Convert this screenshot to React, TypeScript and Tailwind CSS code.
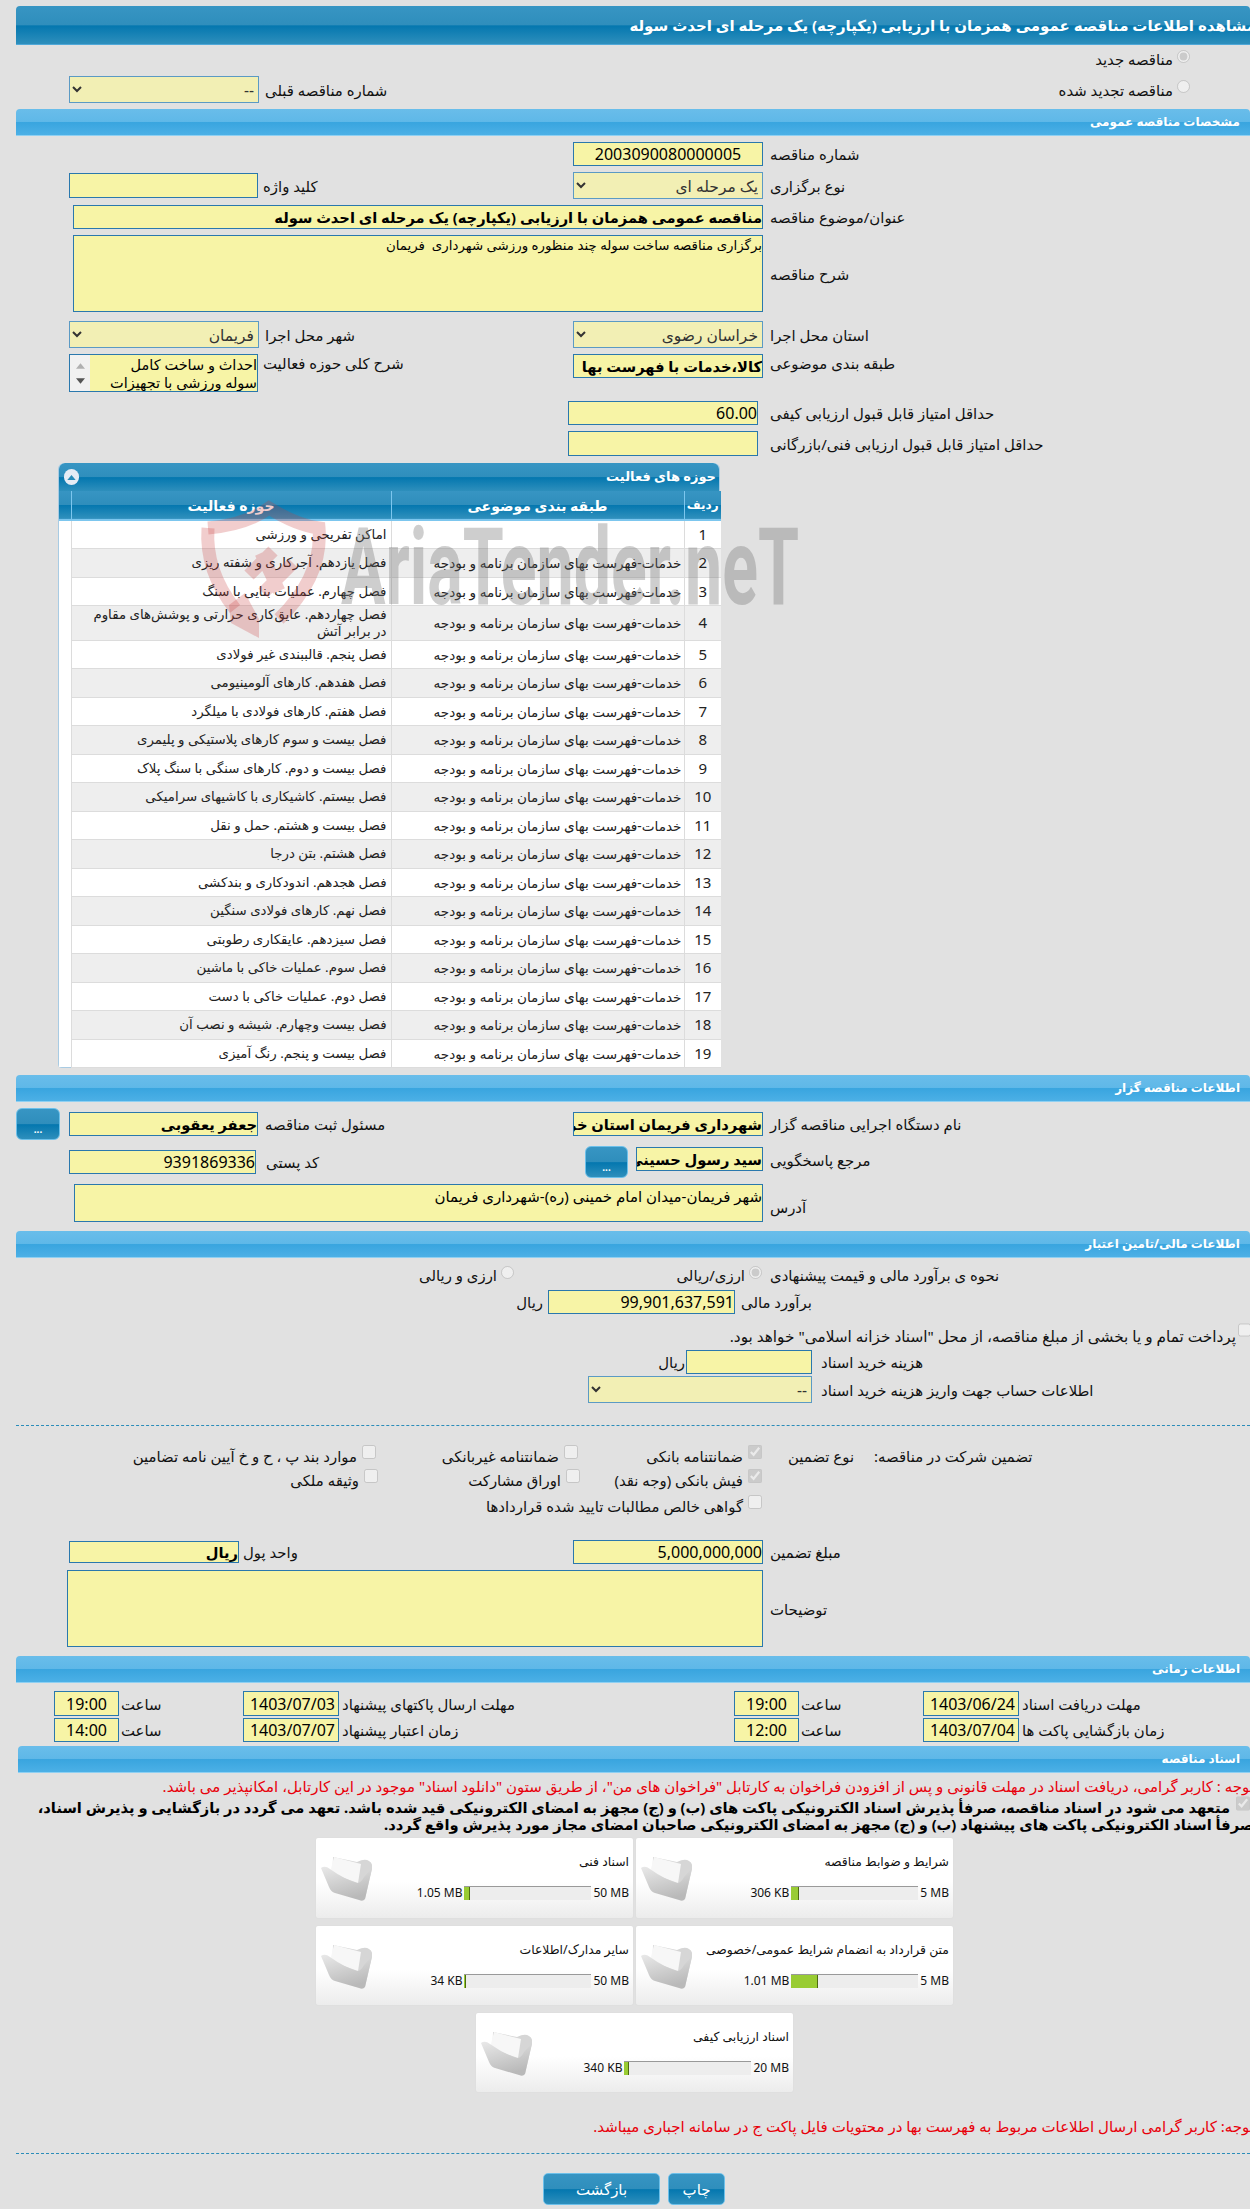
import type { ReactNode } from 'react';

const FIELD = 'shrink-0 bg-[#f7f4a6] border border-[#2a78ad] text-black outline-none';
const DARK_BAR = 'bg-[linear-gradient(#3795c3_0%,#2f8ebc_50%,#0477af_52%,#2e8fbc_100%)]';

function Input({ value = '', cls, bold }: { value?: string; cls: string; bold?: boolean }) {
  return (
    <input
      readOnly
      dir="rtl"
      value={value}
      className={`${FIELD} ${cls} ${bold ? 'font-bold text-[14.67px]' : 'text-[16px]'}`}
    />
  );
}

function Area({ value = '', cls }: { value?: string; cls: string }) {
  return <textarea readOnly dir="rtl" value={value} className={`${FIELD} ${cls} resize-none overflow-hidden`} />;
}

function Select({ value, cls }: { value: string; cls: string }) {
  return (
    <select disabled dir="rtl" value={value} className={`shrink-0 bg-[#f2efb4] border border-[#5b9ac4] text-[#333] text-[15.5px] ${cls}`}>
      <option value={value}>{value}</option>
    </select>
  );
}

function Lbl({ children, cls = '' }: { children: ReactNode; cls?: string }) {
  return <span dir="rtl" className={`whitespace-nowrap text-[14.9px] leading-[18px] text-[#111] ${cls}`}>{children}</span>;
}

function SectionBar({ title, cls }: { title: string; cls: string }) {
  return (
    <div dir="rtl" className={`h-[27px] rounded-t-[4px] flex items-center pr-[10px] ml-[16px] text-white font-bold text-[12px] border-b border-[#8fd0f2] bg-[linear-gradient(#69bdea_0%,#5fb8e8_48%,#39a5df_52%,#4cb0e6_100%)] ${cls}`}>
      {title}
    </div>
  );
}

function Radio({ checked, label }: { checked?: boolean; label: string }) {
  return (
    <>
      <Lbl>{label}</Lbl>
      <input type="radio" disabled checked={!!checked} readOnly className="w-[13px] h-[13px] mb-[6px] ml-[4px] shrink-0" />
    </>
  );
}

function Check({ checked, label, cls }: { checked?: boolean; label: string; cls: string }) {
  return (
    <div className={`flex justify-end items-center shrink-0 ${cls}`}>
      <Lbl>{label}</Lbl>
      <input type="checkbox" disabled checked={!!checked} readOnly className="w-[14px] h-[14px] ml-[5px] mb-[8px] shrink-0" />
    </div>
  );
}

function DotsButton({ cls }: { cls: string }) {
  return (
    <button className={`shrink-0 h-[32px] rounded-[6px] border border-[#6cc0ea] text-white font-bold text-[10px] leading-none pt-[10px] ${DARK_BAR} ${cls}`}>
      ...
    </button>
  );
}

function Folder() {
  return (
    <svg viewBox="0 0 52 46" className="w-[52px] h-[46px] shrink-0 mt-[17px]">
      <defs>
        <linearGradient id="fold" x1="0" y1="0" x2="0.4" y2="1">
          <stop offset="0" stopColor="#e9e9e9" />
          <stop offset="1" stopColor="#b9b9b9" />
        </linearGradient>
      </defs>
      <path d="M13 2 L37 7 Q45 3 49 6 Q53 8 52 14 L45 44 L12 36 Z" fill="#d6d6d6" />
      <path d="M14 2 L41 9 L38 28 L10 18 Z" fill="#f7f7f7" />
      <path d="M1 13 Q5 10 10 14 Q24 24 37 28 Q41 28 44 22 L52 13 L45 44 Q43 47 39 45 L15 38 Q11 37 9 32 Z" fill="url(#fold)" />
    </svg>
  );
}

function DocCard({ title, used, max, pct }: { title: string; used: string; max: string; pct: number }) {
  return (
    <div className="flex h-full w-[317px] shrink-0 pl-[4px] pr-[4px] rounded-[2px] bg-[linear-gradient(#ffffff_55%,#ececec_100%)] shadow-[0_0_1px_#ccc]">
      <Folder />
      <div className="flex-1 flex flex-col">
        <div dir="rtl" className="mt-[15px] h-[18px] text-[12.4px] leading-[18px] text-[#111] whitespace-nowrap">{title}</div>
        <div className="mt-[15px] flex justify-end items-center h-[14px] text-[12px] leading-[14px] text-[#111] gap-[2px]">
          <span className="whitespace-nowrap">{used}</span>
          <div className="w-[127px] h-[14px] bg-[#ededed] border-t border-[#999]">
            <div className="h-full bg-[#99cc33] border-r border-[#4d6b12]" style={{ width: pct }} />
          </div>
          <span className="whitespace-nowrap">{max}</span>
        </div>
      </div>
    </div>
  );
}

const CAT = 'خدمات-فهرست بهای سازمان برنامه و بودجه';
const ROWS = [
  'اماکن تفریحی و ورزشی',
  'فصل یازدهم. آجرکاری و شفته ریزی',
  'فصل چهارم. عملیات بنایی با سنگ',
  'فصل چهاردهم. عایق‌کاری حرارتی و پوشش‌های مقاوم در برابر آتش',
  'فصل پنجم. قالببندی غیر فولادی',
  'فصل هفدهم. کارهای آلومینیومی',
  'فصل هفتم. کارهای فولادی با میلگرد',
  'فصل بیست و سوم کارهای پلاستیکی و پلیمری',
  'فصل بیست و دوم. کارهای سنگی با سنگ پلاک',
  'فصل بیستم. کاشیکاری با کاشیهای سرامیکی',
  'فصل بیست و هشتم. حمل و نقل',
  'فصل هشتم. بتن درجا',
  'فصل هجدهم. اندودکاری و بندکشی',
  'فصل نهم. کارهای فولادی سنگین',
  'فصل سیزدهم. عایقکاری رطوبتی',
  'فصل سوم. عملیات خاکی با ماشین',
  'فصل دوم. عملیات خاکی با دست',
  'فصل بیست وچهارم. شیشه و نصب آن',
  'فصل بیست و پنجم. رنگ آمیزی',
];

function Watermark() {
  return (
    <svg viewBox="0 0 600 140" className="absolute left-[142px] top-[38px] w-[600px] h-[140px] pointer-events-none overflow-visible">
      <g fill="none" stroke="#c83c3c" strokeOpacity="0.26" strokeWidth="13">
        <path d="M7 27 Q45 24 68 7 Q95 24 118 27 Q122 75 78 118" />
        <path d="M7 27 Q4 70 34 108" />
        <path d="M48 74 L72 50 M62 92 L92 62 M60 52 L78 90" />
      </g>
      <polygon points="28,104 44,92 58,118 58,137 30,122" fill="#c83c3c" fillOpacity="0.26" />
      <text
        x="140"
        y="103"
        textLength="458"
        lengthAdjust="spacingAndGlyphs"
        fontFamily="Roboto"
        fontWeight="700"
        fontSize="108"
        fill="#6f6f6f"
        fillOpacity="0.34"
      >
        AriaTender.neT
      </text>
    </svg>
  );
}

function ActivityTable() {
  return (
    <div className="relative ml-[58px] mt-[7px] w-[662px] h-[605px] rounded-t-[6px] rounded-b-[4px] bg-white border-b border-x border-[#a8cbe3]">
      <div dir="rtl" className={`relative h-[28px] rounded-t-[6px] flex items-center pr-[3px] text-white font-bold text-[13px] ${DARK_BAR}`}>
        حوزه های فعالیت
        <span className="absolute left-[5px] top-[6px] w-[15px] h-[16px] rounded-full bg-[#e6ecf5] flex items-center justify-center">
          <svg viewBox="0 0 10 6" className="w-[9px] h-[5px]"><polygon points="0,6 5,0 10,6" fill="#2a8cb9" /></svg>
        </span>
      </div>
      <table className="w-full table-fixed border-collapse text-[13.33px] text-[#222]">
        <colgroup>
          <col className="w-[12px]" />
          <col className="w-[320px]" />
          <col className="w-[293px]" />
          <col className="w-[37px]" />
        </colgroup>
        <thead>
          <tr className={`h-[29px] text-white font-bold text-[14px] border-b-2 border-[#7cc6ee] ${DARK_BAR}`}>
            <th className="border-r border-[#7cc6ee]" />
            <th className="border-r border-[#7cc6ee]" dir="rtl">حوزه فعالیت</th>
            <th className="border-r border-[#7cc6ee]" dir="rtl">طبقه بندی موضوعی</th>
            <th dir="rtl" className="font-bold text-[12px] whitespace-nowrap">ردیف</th>
          </tr>
        </thead>
        <tbody>
          {ROWS.map((r, i) => (
            <tr key={i} className={i === 3 ? 'h-[35px]' : i % 2 ? 'h-[29px]' : 'h-[28px]'}>
              <td className="bg-white" />
              <td dir="rtl" className={`pr-[4px] pl-[10px] leading-[17px] border-l border-b border-[#dcdcdc] ${i % 2 ? 'bg-[#eeeeee]' : 'bg-white'}`}>{r}</td>
              <td dir="rtl" className={`pr-[2px] text-[13.6px] leading-[17px] whitespace-nowrap border-l border-b border-[#dcdcdc] ${i % 2 ? 'bg-[#eeeeee]' : 'bg-white'}`}>{i === 0 ? '' : CAT}</td>
              <td className={`text-center text-[15px] border-l border-b border-[#dcdcdc] ${i % 2 ? 'bg-[#eeeeee]' : 'bg-white'}`}>{i + 1}</td>
            </tr>
          ))}
        </tbody>
      </table>
      <Watermark />
    </div>
  );
}

function TimeRow({ cls, a, b, c, d, la, lc }: { cls: string; a: string; b: string; c: string; d: string; la: string; lc: string }) {
  return (
    <div className={`flex items-center ml-[54px] ${cls}`}>
      <Input value={d} cls="w-[65px] h-full text-center" />
      <Lbl cls="w-[124px] pl-[2px] text-left">ساعت</Lbl>
      <Input value={c} cls="w-[96px] h-full pr-[3px]" />
      <div className="w-[395px] shrink-0 pl-[3px]"><Lbl>{lc}</Lbl></div>
      <Input value={b} cls="w-[65px] h-full text-center" />
      <Lbl cls="w-[124px] pl-[2px] text-left">ساعت</Lbl>
      <Input value={a} cls="w-[96px] h-full pr-[3px]" />
      <Lbl cls="ml-[3px]">{la}</Lbl>
    </div>
  );
}

export default function App() {
  return (
    <div className="relative w-[1250px] h-[2209px] overflow-hidden bg-[#e1e1e1] font-['Noto_Sans','DejaVu_Sans',sans-serif]">
      <div className={`mt-[6px] ml-[16px] h-[39px] rounded-t-[4px] flex justify-end items-center whitespace-nowrap text-white font-bold text-[15px] border-b border-[#4fa8d8] ${DARK_BAR}`}>
        <span dir="rtl" className="-mr-[6px]">مشاهده اطلاعات مناقصه عمومی همزمان با ارزیابی (یکپارچه) یک مرحله ای احدث سوله</span>
      </div>

      <div className="flex justify-end items-center mt-[5px] h-[18px] pr-[60px]">
        <Radio checked label="مناقصه جدید" />
      </div>
      <div className="flex items-center mt-[8px] h-[27px] ml-[69px] pr-[60px]">
        <Select value="--" cls="w-[190px] h-full" />
        <Lbl cls="ml-[6px]">شماره مناقصه قبلی</Lbl>
        <div className="flex-1 flex justify-end items-center">
          <Radio label="مناقصه تجدید شده" />
        </div>
      </div>

      <SectionBar title="مشخصات مناقصه عمومی" cls="mt-[6px]" />

      <div className="flex items-center h-[24px] mt-[6px] ml-[573px]">
        <Input value="2003090080000005" cls="w-[190px] h-full text-center" />
        <Lbl cls="ml-[7px]">شماره مناقصه</Lbl>
      </div>
      <div className="flex items-center h-[27px] mt-[6px] ml-[69px]">
        <div className="w-[504px] flex items-center shrink-0">
          <Input cls="w-[189px] h-[25px]" />
          <Lbl cls="ml-[5px]">کلید واژه</Lbl>
        </div>
        <Select value="یک مرحله ای" cls="w-[190px] h-full" />
        <Lbl cls="ml-[7px]">نوع برگزاری</Lbl>
      </div>
      <div className="flex items-center h-[24px] mt-[6px] ml-[73px]">
        <Input bold value="مناقصه عمومی همزمان با ارزیابی (یکپارچه) یک مرحله ای احدث سوله" cls="w-[690px] h-full" />
        <Lbl cls="ml-[7px]">عنوان/موضوع مناقصه</Lbl>
      </div>
      <div className="flex items-center h-[77px] mt-[6px] ml-[73px]">
        <Area value="برگزاری مناقصه ساخت سوله چند منظوره ورزشی شهرداری  فریمان" cls="w-[690px] h-full text-[13.33px]" />
        <Lbl cls="ml-[7px]">شرح مناقصه</Lbl>
      </div>
      <div className="flex items-center h-[27px] mt-[9px] ml-[69px]">
        <div className="w-[504px] flex items-center shrink-0">
          <Select value="فریمان" cls="w-[190px] h-[27px]" />
          <Lbl cls="ml-[6px]">شهر محل اجرا</Lbl>
        </div>
        <Select value="خراسان رضوی" cls="w-[190px] h-full" />
        <Lbl cls="ml-[7px]">استان محل اجرا</Lbl>
      </div>
      <div className="flex items-start h-[38px] mt-[6px] ml-[69px]">
        <div className="w-[504px] flex items-start shrink-0">
          <div className="w-[189px] h-[38px] flex shrink-0 border border-[#2a78ad] bg-[#f7f4a6] overflow-hidden">
            <div className="w-[20px] h-full shrink-0 bg-[#f1f1f1] flex flex-col items-center justify-around py-[3px]">
              <svg viewBox="0 0 10 6" className="w-[9px] h-[6px]"><polygon points="0,6 5,0 10,6" fill="#b0b0b0" /></svg>
              <svg viewBox="0 0 10 6" className="w-[9px] h-[6px]"><polygon points="0,0 5,6 10,0" fill="#555555" /></svg>
            </div>
            <div dir="rtl" className="flex-1 text-[14.5px] leading-[18px] text-black whitespace-nowrap">احداث و ساخت کامل<br />سوله ورزشی با تجهیزات</div>
          </div>
          <Lbl cls="ml-[5px]">شرح کلی حوزه فعالیت</Lbl>
        </div>
        <Input bold value="کالا،خدمات با فهرست بها" cls="w-[190px] h-[24px]" />
        <Lbl cls="ml-[7px]">طبقه بندی موضوعی</Lbl>
      </div>
      <div className="flex items-center h-[24px] mt-[9px] ml-[568px]">
        <Input value="60.00" cls="w-[190px] h-full" />
        <Lbl cls="ml-[12px]">حداقل امتیاز قابل قبول ارزیابی کیفی</Lbl>
      </div>
      <div className="flex items-center h-[25px] mt-[6px] ml-[568px]">
        <Input cls="w-[190px] h-full" />
        <Lbl cls="ml-[12px]">حداقل امتیاز قابل قبول ارزیابی فنی/بازرگانی</Lbl>
      </div>

      <ActivityTable />

      <SectionBar title="اطلاعات مناقصه گزار" cls="mt-[7px]" />

      <div className="flex items-center h-[32px] mt-[6px] ml-[16px]">
        <div className="w-[557px] flex items-center shrink-0">
          <DotsButton cls="w-[44px] mr-[9px]" />
          <Input bold value="جعفر یعقوبی" cls="w-[189px] h-[24px]" />
          <Lbl cls="ml-[7px]">مسئول ثبت مناقصه</Lbl>
        </div>
        <Input bold value="شهرداری فریمان استان خراسان رضوی" cls="w-[190px] h-[24px]" />
        <Lbl cls="ml-[7px]">نام دستگاه اجرایی مناقصه گزار</Lbl>
      </div>
      <div className="flex items-start h-[32px] mt-[6px] ml-[69px]">
        <div className="w-[516px] flex items-center shrink-0 mt-[4px]">
          <Input value="9391869336" cls="w-[187px] h-[24px]" />
          <Lbl cls="ml-[10px]">کد پستی</Lbl>
        </div>
        <DotsButton cls="w-[43px] mr-[8px]" />
        <Input bold value="سید رسول حسینی" cls="w-[127px] h-[24px] mt-[1px]" />
        <Lbl cls="ml-[7px] mt-[5px]">مرجع پاسخگویی</Lbl>
      </div>
      <div className="flex items-center h-[38px] mt-[6px] ml-[74px]">
        <Area value="شهر فریمان-میدان امام خمینی (ره)-شهرداری فریمان" cls="w-[689px] h-full text-[15px]" />
        <Lbl cls="ml-[7px] mt-[8px]">آدرس</Lbl>
      </div>

      <SectionBar title="اطلاعات مالی/تامین اعتبار" cls="mt-[9px]" />

      <div className="flex items-center h-[20px] mt-[7px]">
        <div className="w-[514px] flex justify-end items-center shrink-0"><Radio label="ارزی و ریالی" /></div>
        <div className="w-[248px] flex justify-end items-center shrink-0"><Radio checked label="ارزی/ریالی" /></div>
        <Lbl cls="ml-[8px]">نحوه ی برآورد مالی و قیمت پیشنهادی</Lbl>
      </div>
      <div className="flex items-center h-[24px] mt-[5px]">
        <div className="w-[543px] flex justify-end shrink-0"><Lbl>ریال</Lbl></div>
        <Input value="99,901,637,591" cls="w-[187px] h-full ml-[5px]" />
        <Lbl cls="ml-[6px]">برآورد مالی</Lbl>
      </div>
      <div className="flex justify-end items-start h-[24px] mt-[9px] -mr-[1px]">
        <Lbl cls="mt-[4px] !text-[15.3px]">پرداخت تمام و یا بخشی از مبلغ مناقصه، از محل "اسناد خزانه اسلامی" خواهد بود.</Lbl>
        <input type="checkbox" disabled readOnly className="w-[13px] h-[14px] ml-[2px] shrink-0" />
      </div>
      <div className="flex items-center h-[24px] mt-[3px]">
        <div className="w-[685px] flex justify-end shrink-0"><Lbl>ریال</Lbl></div>
        <Input cls="w-[126px] h-full ml-[1px]" />
        <Lbl cls="ml-[9px]">هزینه خرید اسناد</Lbl>
      </div>
      <div className="flex items-center h-[27px] mt-[2px] ml-[588px]">
        <Select value="--" cls="w-[224px] h-full" />
        <Lbl cls="ml-[9px]">اطلاعات حساب جهت واریز هزینه خرید اسناد</Lbl>
      </div>

      <div className="ml-[16px] mt-[22px] border-t border-dashed border-[#2a8cb9]" />

      <div className="flex items-center h-[22px] mt-[19px]">
        <Check label="موارد بند پ ، ح و خ آیین نامه تضامین" cls="w-[376px]" />
        <Check label="ضمانتنامه غیربانکی" cls="w-[202px]" />
        <Check checked label="ضمانتنامه بانکی" cls="w-[184px]" />
        <Lbl cls="ml-[26px]">نوع تضمین</Lbl>
        <Lbl cls="ml-[20px]">تضمین شرکت در مناقصه:</Lbl>
      </div>
      <div className="flex items-center h-[22px] mt-[2px]">
        <Check label="وثیقه ملکی" cls="w-[378px]" />
        <Check label="اوراق مشارکت" cls="w-[202px]" />
        <Check checked label="فیش بانکی (وجه نقد)" cls="w-[182px]" />
      </div>
      <div className="flex items-center h-[22px] mt-[4px]">
        <Check label="گواهی خالص مطالبات تایید شده قراردادها" cls="w-[762px]" />
      </div>

      <div className="flex items-center h-[24px] mt-[23px] ml-[69px]">
        <div className="w-[504px] flex items-center shrink-0">
          <Input bold value="ریال" cls="w-[170px] h-full" />
          <Lbl cls="ml-[4px]">واحد پول</Lbl>
        </div>
        <Input value="5,000,000,000" cls="w-[190px] h-full" />
        <Lbl cls="ml-[7px]">مبلغ تضمین</Lbl>
      </div>
      <div className="flex items-center h-[77px] mt-[6px] ml-[67px]">
        <Area cls="w-[696px] h-full" />
        <Lbl cls="ml-[7px]">توضیحات</Lbl>
      </div>

      <SectionBar title="اطلاعات زمانی" cls="mt-[9px]" />

      <TimeRow cls="h-[25px] mt-[8px]" a="1403/06/24" b="19:00" c="1403/07/03" d="19:00" la="مهلت دریافت اسناد" lc="مهلت ارسال پاکتهای پیشنهاد" />
      <TimeRow cls="h-[24px] mt-[2px]" a="1403/07/04" b="12:00" c="1403/07/07" d="14:00" la="زمان بازگشایی پاکت ها" lc="زمان اعتبار پیشنهاد" />

      <SectionBar title="اسناد مناقصه" cls="mt-[4px] !ml-[18px]" />

      <div className="flex justify-end mt-[4px] h-[18px] -mr-[4px]">
        <span dir="rtl" className="whitespace-nowrap text-[15px] leading-[18px] text-[#e8000b]">توجه : کاربر گرامی، دریافت اسناد در مهلت قانونی و پس از افزودن فراخوان به کارتابل "فراخوان های من"، از طریق ستون "دانلود اسناد" موجود در این کارتابل، امکانپذیر می باشد.</span>
      </div>
      <div className="relative h-[36px] mt-[4px]">
        <input type="checkbox" checked disabled readOnly className="absolute right-0 -top-[3px] w-[14px] h-[15px]" />
        <div dir="rtl" className="whitespace-nowrap font-bold text-[14.7px] leading-[17px] text-black pr-[20px]">متعهد می شود در اسناد مناقصه، صرفأ پذیرش اسناد الکترونیکی پاکت های (ب) و (ج) مجهز به امضای الکترونیکی قید شده باشد. تعهد می گردد در بازگشایی و پذیرش اسناد،</div>
        <div dir="rtl" className="whitespace-nowrap font-bold text-[14.7px] leading-[17px] text-black -mr-[4px]">صرفأ اسناد الکترونیکی پاکت های پیشنهاد (ب) و (ج) مجهز به امضای الکترونیکی صاحبان امضای مجاز مورد پذیرش واقع گردد.</div>
      </div>

      <div className="flex gap-[3px] h-[80px] mt-[3px] ml-[316px]">
        <DocCard title="اسناد فنی" used="1.05 MB" max="50 MB" pct={6} />
        <DocCard title="شرایط و ضوابط مناقصه" used="306 KB" max="5 MB" pct={8} />
      </div>
      <div className="flex gap-[3px] h-[79px] mt-[8px] ml-[316px]">
        <DocCard title="سایر مدارک/اطلاعات" used="34 KB" max="50 MB" pct={2} />
        <DocCard title="متن قرارداد به انضمام شرایط عمومی/خصوصی" used="1.01 MB" max="5 MB" pct={27} />
      </div>
      <div className="flex h-[79px] mt-[8px] ml-[476px]">
        <DocCard title="اسناد ارزیابی کیفی" used="340 KB" max="20 MB" pct={5} />
      </div>

      <div className="flex justify-end mt-[25px] h-[18px] -mr-[4px]">
        <span dir="rtl" className="whitespace-nowrap text-[15px] leading-[18px] text-[#e8000b]">توجه: کاربر گرامی ارسال اطلاعات مربوط به فهرست بها در محتویات فایل پاکت ج در سامانه اجباری میباشد.</span>
      </div>

      <div className="ml-[16px] mt-[18px] border-t border-dashed border-[#2a8cb9]" />

      <div className="flex gap-[8px] h-[32px] mt-[19px] ml-[543px]">
        <button className={`w-[117px] h-full rounded-[5px] border border-[#6cc0ea] text-white text-[15px] ${DARK_BAR}`}>بازگشت</button>
        <button className={`w-[57px] h-full rounded-[5px] border border-[#6cc0ea] text-white text-[15px] ${DARK_BAR}`}>چاپ</button>
      </div>
    </div>
  );
}
